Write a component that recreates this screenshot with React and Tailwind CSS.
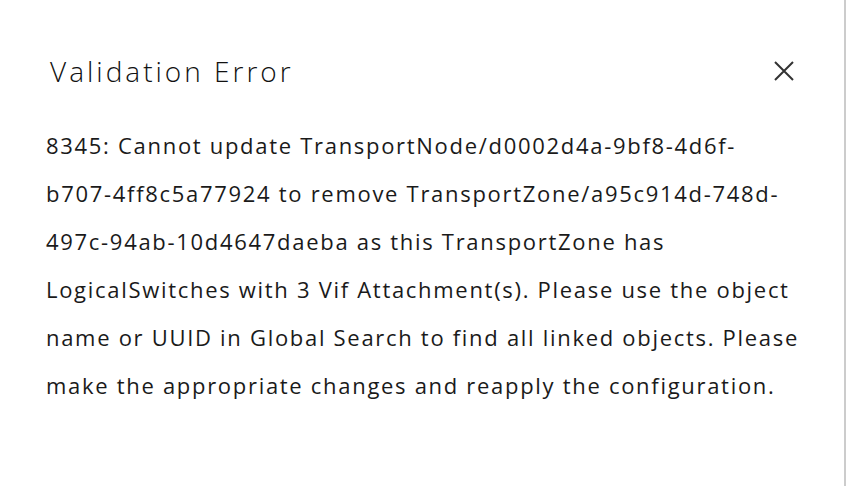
import React from "react";

const lines = [
  "8345: Cannot update TransportNode/d0002d4a-9bf8-4d6f-",
  "b707-4ff8c5a77924 to remove TransportZone/a95c914d-748d-",
  "497c-94ab-10d4647daeba as this TransportZone has",
  "LogicalSwitches with 3 Vif Attachment(s). Please use the object",
  "name or UUID in Global Search to find all linked objects. Please",
  "make the appropriate changes and reapply the configuration.",
];

export default function App() {
  return (
    <div className="flex h-[486px] w-[846px] bg-white" style={{ fontFamily: "'Open Sans', sans-serif" }}>
      <div className="flex flex-1 flex-col">
        {/* header */}
        <div className="flex items-center justify-between pl-[50px] pr-[50px] pt-[52px]">
          <h2 className="text-[28px] font-light leading-[38px] tracking-[3px] text-[#111]">Validation Error</h2>
          <button className="flex h-5 w-5 items-center justify-center text-[#333]">
            <svg width="20" height="20" viewBox="0 0 20 20" fill="none" stroke="currentColor" strokeWidth="2">
              <path d="M1 1 L19 19 M19 1 L1 19" />
            </svg>
          </button>
        </div>

        {/* body */}
        <div className="mt-[31px] pl-[46px] text-[22px] leading-[48px] tracking-[1.7px] text-[#1a1a1a]">
          {lines.map((l, i) => (
            <div key={i} className="whitespace-nowrap">
              {l}
            </div>
          ))}
        </div>
      </div>
      <div className="w-[2px] bg-[#cccccc]" />
    </div>
  );
}
